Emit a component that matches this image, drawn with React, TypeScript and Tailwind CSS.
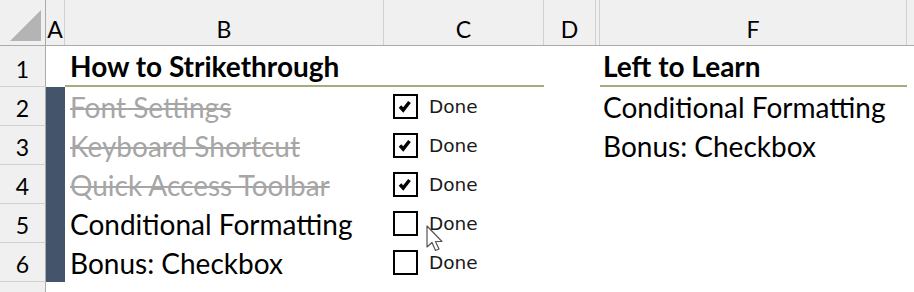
import React from "react";

const txt = "font-['Lato',sans-serif]";

function Check({ checked }: { checked: boolean }) {
  return (
    <div className="w-[25px] h-[25px] border-2 border-black bg-white flex items-center justify-center shrink-0">
      {checked && (
        <svg width="21" height="21" viewBox="0 0 21 21">
          <path d="M5 10.5 L8.2 14 L14.5 6" fill="none" stroke="#000" strokeWidth="3.4" strokeLinejoin="miter" />
        </svg>
      )}
    </div>
  );
}

type Row = {
  n: number;
  h: string;
  b?: React.ReactNode;
  c?: React.ReactNode;
  f?: React.ReactNode;
  bar?: boolean;
  underline?: boolean;
};

export default function App() {
  const strike = (s: string) => (
    <span className="text-[#a6a6a6] line-through decoration-[#a6a6a6] decoration-2">{s}</span>
  );
  const done = (checked: boolean) => (
    <div className="flex items-center">
      <Check checked={checked} />
      <span className="ml-[11px] font-['DejaVu_Sans',sans-serif] text-[18.5px] text-[#1a1a1a]">Done</span>
    </div>
  );
  const rows: Row[] = [
    {
      n: 1,
      h: "h-[41px]",
      b: <span className="font-bold">How to Strikethrough</span>,
      f: <span className="font-bold">Left to Learn</span>,
      underline: true,
    },
    { n: 2, h: "h-[39px]", b: strike("Font Settings"), c: done(true), f: "Conditional Formatting", bar: true },
    { n: 3, h: "h-[39px]", b: strike("Keyboard Shortcut"), c: done(true), f: "Bonus: Checkbox", bar: true },
    { n: 4, h: "h-[39px]", b: strike("Quick Access Toolbar"), c: done(true), bar: true },
    { n: 5, h: "h-[39px]", b: "Conditional Formatting", c: done(false), bar: true },
    { n: 6, h: "h-[39px]", b: "Bonus: Checkbox", c: done(false), bar: true },
  ];

  const hdr =
    "h-full border-r border-[#d0d0d0] flex items-end justify-center pb-[4px] leading-[24px] text-[23px] text-black";

  return (
    <div className={`w-[914px] h-[292px] bg-white overflow-hidden relative ${txt}`}>
      {/* column headers */}
      <div className="flex h-[46px] bg-[#f0f0f0] border-b border-[#ababab]">
        <div className="w-[46px] h-full border-r border-[#ababab] flex items-end justify-end pr-[3px] pb-[3px]">
          <svg width="32" height="32" viewBox="0 0 32 32">
            <polygon points="31,0 31,31 0,31" fill="#b4b4b4" />
          </svg>
        </div>
        <div className={`w-[19px] ${hdr}`}>A</div>
        <div className={`w-[319px] ${hdr}`}>B</div>
        <div className={`w-[160px] ${hdr}`}>C</div>
        <div className={`w-[52px] ${hdr}`}>D</div>
        <div className={`w-[4px] ${hdr}`}></div>
        <div className={`w-[307px] ${hdr}`}>F</div>
        <div className="flex-1" />
      </div>

      {rows.map((r) => (
        <div key={r.n} className={`flex ${r.h}`}>
          <div className="w-[46px] h-full bg-[#f0f0f0] border-r border-b border-r-[#ababab] border-b-[#d0d0d0] flex items-end justify-center pb-[5px] leading-[24px] text-[23px] text-black">
            {r.n}
          </div>
          <div className={`w-[19px] h-full ${r.bar ? "bg-[#44546a]" : ""}`} />
          <div
            className={`w-[319px] h-full flex items-end pl-[5px] pb-[5px] leading-[28px] text-[28px] text-black whitespace-nowrap ${
              r.underline ? "border-b-2 border-[#a8ab7e]" : ""
            }`}
          >
            {r.b}
          </div>
          <div
            className={`w-[160px] h-full flex items-center pl-[9px] ${
              r.underline ? "border-b-2 border-[#a8ab7e]" : ""
            }`}
          >
            {r.c}
          </div>
          <div className="w-[52px] h-full" />
          <div className="w-[4px] h-full" />
          <div
            className={`w-[307px] h-full flex items-end pl-[3px] pb-[5px] leading-[28px] text-[28px] text-black whitespace-nowrap ${
              r.underline ? "border-b-2 border-[#a8ab7e]" : ""
            }`}
          >
            {r.f}
          </div>
          <div className="flex-1" />
        </div>
      ))}

      <div className="flex h-[30px]">
        <div className="w-[46px] h-full bg-[#f0f0f0] border-r border-[#ababab]" />
      </div>

      {/* mouse cursor */}
      <svg className="absolute left-[426px] top-[225px]" width="20" height="28" viewBox="0 0 20 28">
        <path
          d="M1 1 L1 22 L6 17.5 L9.5 25.5 L13 24 L9.5 16.5 L16 16.5 Z"
          fill="#ffffff"
          stroke="#555"
          strokeWidth="1.2"
          strokeLinejoin="round"
        />
      </svg>
    </div>
  );
}
